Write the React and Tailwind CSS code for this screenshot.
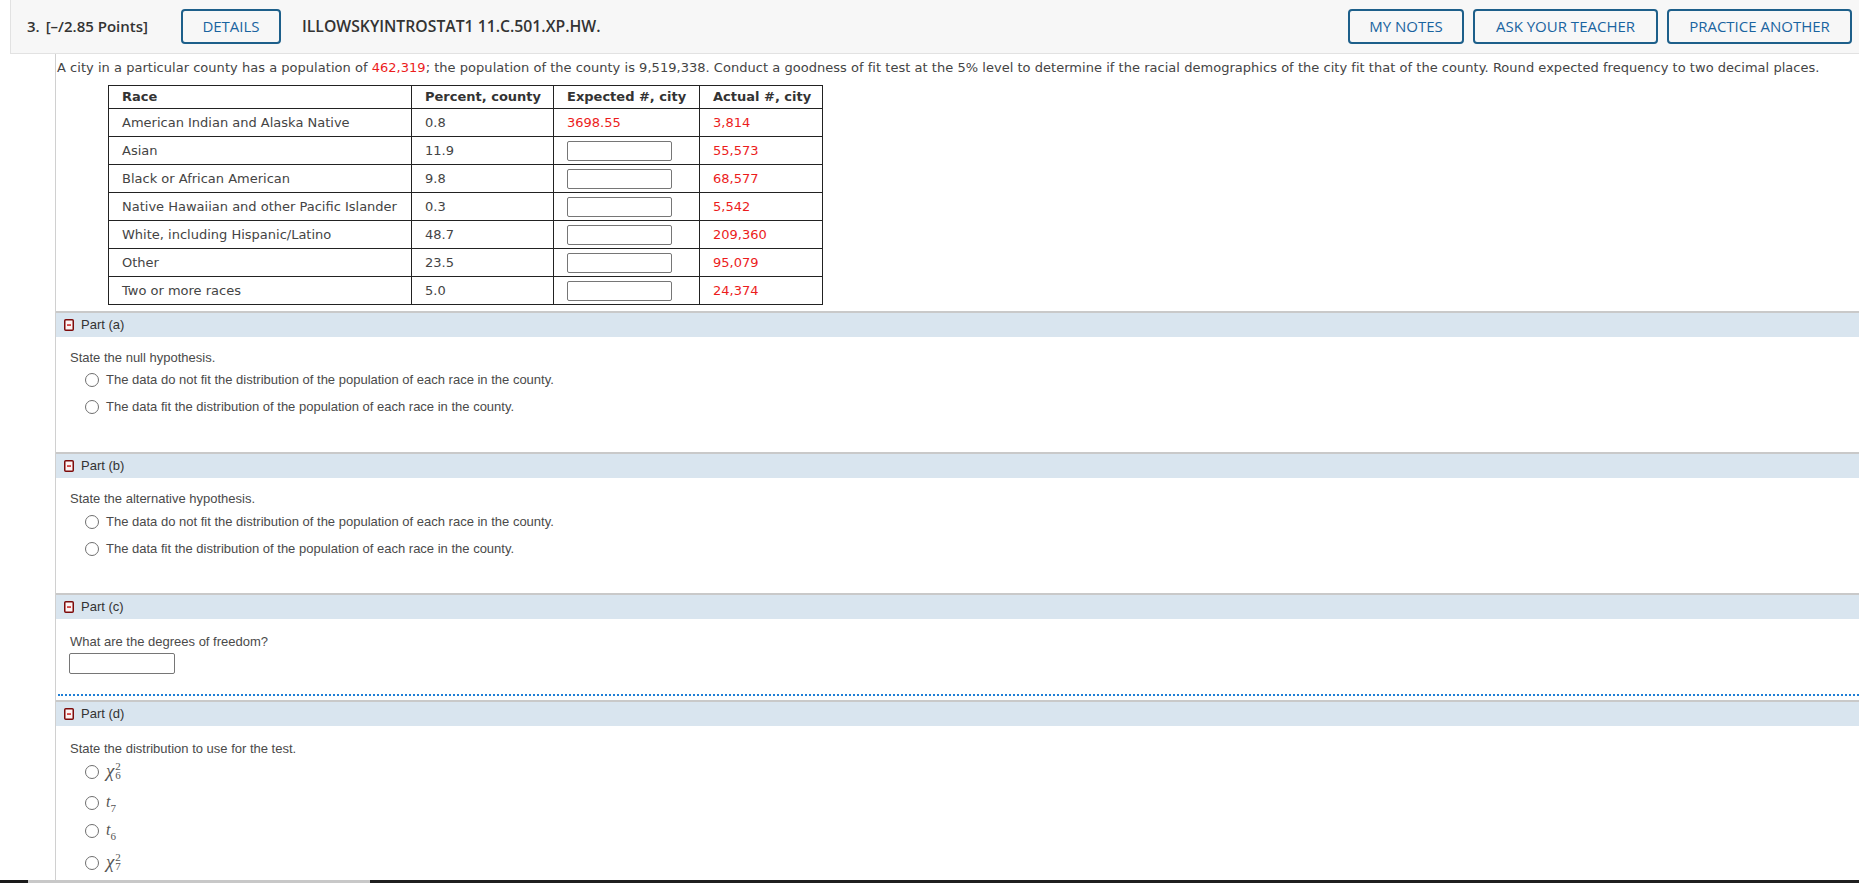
import React from "react";

const rows = [
  ["American Indian and Alaska Native", "0.8", "3698.55", "3,814"],
  ["Asian", "11.9", null, "55,573"],
  ["Black or African American", "9.8", null, "68,577"],
  ["Native Hawaiian and other Pacific Islander", "0.3", null, "5,542"],
  ["White, including Hispanic/Latino", "48.7", null, "209,360"],
  ["Other", "23.5", null, "95,079"],
  ["Two or more races", "5.0", null, "24,374"],
];

function Btn({ children, w }) {
  return (
    <div
      className={`h-[35px] ${w} border-2 border-[#1d5f8a] rounded-[4px] flex items-center justify-center text-[15px] font-medium text-[#1a64a0] font-['Open_Sans',sans-serif]`}
    >
      {children}
    </div>
  );
}

function PartBar({ label }) {
  return (
    <div className="h-[26px] border-t-2 border-[#c9c9c9] bg-[#d9e5ef] flex items-center pl-[8px]">
      <svg width="10" height="12" viewBox="0 0 10 12" className="mr-[7px]">
        <rect x="0.75" y="0.75" width="8.5" height="10.5" rx="1" fill="#fdf3f3" stroke="#7d0b0b" strokeWidth="1.5" />
        <rect x="3" y="5.4" width="4" height="1.3" fill="#c00000" />
      </svg>
      <span className="text-[13px] text-[#333] font-['Liberation_Sans',Arial,sans-serif]">{label}</span>
    </div>
  );
}

function Radio({ children }) {
  return (
    <div className="flex items-center pl-[29px]">
      <span className="w-[14px] h-[14px] rounded-full border border-[#6f6f6f] bg-white" />
      <span className="ml-[7px]">{children}</span>
    </div>
  );
}

function Chi({ sub }) {
  return (
    <span className="inline-flex items-center font-['Liberation_Serif',serif] text-[#555]">
      <span className="italic text-[19px] leading-[18px]">χ</span>
      <span className="inline-flex flex-col text-[11px] leading-[9px] ml-[1px]">
        <span>2</span>
        <span>{sub}</span>
      </span>
    </span>
  );
}

function T({ sub }) {
  return (
    <span className="inline-flex items-end font-['Liberation_Serif',serif] text-[#555]">
      <span className="italic text-[16px] leading-[15px]">t</span>
      <span className="text-[11px] leading-[10px] translate-y-[4px]">{sub}</span>
    </span>
  );
}

export default function App() {
  return (
    <div className="w-[1859px] h-[883px] overflow-hidden bg-white relative">
      {/* header */}
      <div className="ml-[10px] h-[54px] bg-[#f7f7f7] border-l border-b border-[#e2e2e2] flex items-center pl-[16px] pr-[7px] font-['Open_Sans',sans-serif] text-[#333]">
        <span className="text-[15px] font-semibold">3.</span>
        <span className="ml-[6px] text-[15px] font-semibold">[–/2.85 Points]</span>
        <div className="ml-[33px]">
          <Btn w="w-[100px]">DETAILS</Btn>
        </div>
        <span className="ml-[21px] text-[15.75px] font-semibold">ILLOWSKYINTROSTAT1 11.C.501.XP.HW.</span>
        <div className="ml-auto flex gap-[9px]">
          <Btn w="w-[116px]">MY NOTES</Btn>
          <Btn w="w-[185px]">ASK YOUR TEACHER</Btn>
          <Btn w="w-[185px]">PRACTICE ANOTHER</Btn>
        </div>
      </div>

      {/* body */}
      <div className="ml-[55px] border-l border-[#d0d0d0] h-[830px]">
        <div className="pt-[6px] h-[22px] leading-[16px] text-[13px] text-[#444] font-['DejaVu_Sans',Verdana,sans-serif] pl-[1px] whitespace-nowrap tracking-[0.03px]">
          A city in a particular county has a population of <span className="text-[#ec1c1c]">462,319</span>; the population of the county is 9,519,338. Conduct a goodness of fit test at the 5% level to determine if the racial demographics of the city fit that of the county. Round expected frequency to two decimal places.
        </div>
        <div className="pl-[52px] pt-[9px]">
          <table className="border-collapse text-[13px] text-[#444] font-['DejaVu_Sans',Verdana,sans-serif]">
            <thead>
              <tr className="h-[23px]">
                <th className="w-[303px] border border-[#222] text-left font-bold text-[#333] pl-[13px]">Race</th>
                <th className="w-[142px] border border-[#222] text-left font-bold text-[#333] pl-[13px]">Percent, county</th>
                <th className="w-[146px] border border-[#222] text-left font-bold text-[#333] pl-[13px]">Expected #, city</th>
                <th className="w-[123px] border border-[#222] text-left font-bold text-[#333] pl-[13px]">Actual #, city</th>
              </tr>
            </thead>
            <tbody>
              {rows.map((r) => (
                <tr key={r[0]} className="h-[28px]">
                  <td className="border border-[#222] pl-[13px]">{r[0]}</td>
                  <td className="border border-[#222] pl-[13px]">{r[1]}</td>
                  <td className="border border-[#222] pl-[13px]">
                    {r[2] ? (
                      <span className="text-[#ec1c1c]">{r[2]}</span>
                    ) : (
                      <div className="w-[105px] h-[20px] border border-[#767676] rounded-[2px] bg-white" />
                    )}
                  </td>
                  <td className="border border-[#222] pl-[13px] text-[#ec1c1c]">{r[3]}</td>
                </tr>
              ))}
            </tbody>
          </table>
        </div>

        <div className="mt-[6px] font-['Liberation_Sans',Arial,sans-serif] text-[13px] text-[#4a4a4a]">
          {/* Part a */}
          <PartBar label="Part (a)" />
          <div className="h-[115px] pt-[13px]">
            <div className="h-[16px] leading-[16px] pl-[14px]">State the null hypothesis.</div>
            <div className="mt-[3px] h-[22px] flex items-center">
              <Radio>The data do not fit the distribution of the population of each race in the county.</Radio>
            </div>
            <div className="mt-[5px] h-[22px] flex items-center">
              <Radio>The data fit the distribution of the population of each race in the county.</Radio>
            </div>
          </div>

          {/* Part b */}
          <PartBar label="Part (b)" />
          <div className="h-[115px] pt-[13px]">
            <div className="h-[16px] leading-[16px] pl-[14px]">State the alternative hypothesis.</div>
            <div className="mt-[4px] h-[22px] flex items-center">
              <Radio>The data do not fit the distribution of the population of each race in the county.</Radio>
            </div>
            <div className="mt-[5px] h-[22px] flex items-center">
              <Radio>The data fit the distribution of the population of each race in the county.</Radio>
            </div>
          </div>

          {/* Part c */}
          <PartBar label="Part (c)" />
          <div className="h-[81px] pt-[15px]">
            <div className="h-[16px] leading-[16px] pl-[14px]">What are the degrees of freedom?</div>
            <div className="mt-[3px] ml-[13px] w-[106px] h-[21px] border border-[#767676] rounded-[2px] bg-white" />
            <div className="mt-[20px] ml-[2px] border-t-2 border-dotted border-[#1f7fd6]" />
          </div>

          {/* Part d */}
          <PartBar label="Part (d)" />
          <div className="pt-[15px]">
            <div className="h-[16px] leading-[16px] pl-[14px]">State the distribution to use for the test.</div>
            <div className="mt-[4px] h-[22px] flex items-center">
              <Radio><Chi sub="6" /></Radio>
            </div>
            <div className="mt-[9px] h-[22px] flex items-center">
              <Radio><T sub="7" /></Radio>
            </div>
            <div className="mt-[6px] h-[22px] flex items-center">
              <Radio><T sub="6" /></Radio>
            </div>
            <div className="mt-[10px] h-[22px] flex items-center">
              <Radio><Chi sub="7" /></Radio>
            </div>
          </div>
        </div>
      </div>

      {/* bottom strip */}
      <div className="absolute bottom-0 left-0 right-0 h-[3px] flex">
        <div className="w-[28px] bg-[#1a1a1a]" />
        <div className="w-[342px] bg-[#c8c8c8]" />
        <div className="flex-1 bg-[#1f1f1f]" />
      </div>
    </div>
  );
}
